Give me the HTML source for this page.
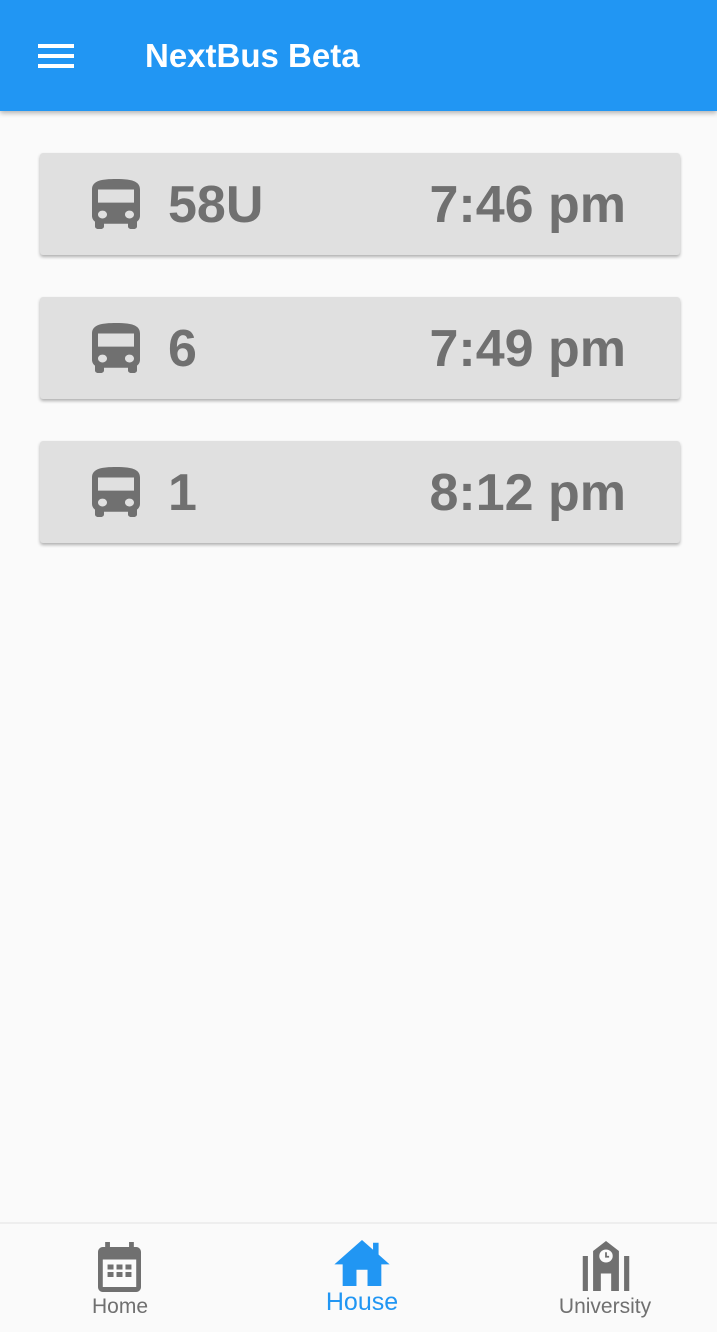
<!DOCTYPE html>
<html><head><meta charset="utf-8"><style>
*{margin:0;padding:0;box-sizing:border-box}
body{width:717px;height:1332px;background:#fafafa;font-family:"Liberation Sans",sans-serif;position:relative;overflow:hidden}
.bar{position:absolute;left:0;top:0;width:717px;height:111px;background:#2196f3;box-shadow:0 2px 5px rgba(0,0,0,.3)}
.ham{position:absolute;left:38px;width:36px;height:4px;background:#fff}
.title{position:absolute;left:145px;top:37px;color:#fff;font-size:33px;font-weight:bold}
.card{position:absolute;left:40px;width:640px;height:102px;background:#e0e0e0;box-shadow:0 2px 3px rgba(0,0,0,.3);border-radius:3px}
.card svg{position:absolute;left:52px;top:26px}
.num{position:absolute;left:128px;top:22px;font-size:52px;font-weight:bold;color:#707070}
.time{position:absolute;right:54px;top:22px;font-size:52px;font-weight:bold;color:#707070}
.nav{position:absolute;left:0;top:1222px;width:717px;height:110px;background:#fafafa;border-top:2px solid #eee}
.lbl{position:absolute;font-size:21px;color:#707070;transform:translateX(-50%)}
</style></head><body>
<div class="bar">
<div class="ham" style="top:44px"></div><div class="ham" style="top:54px"></div><div class="ham" style="top:64px"></div>
<div class="title">NextBus Beta</div>
</div>
<div class="card" style="top:153px"><svg width="48" height="50" viewBox="4 2 16 19" preserveAspectRatio="none"><path fill="#707070" d="M4 16c0 .88.39 1.67 1 2.22V20c0 .55.45 1 1 1h1c.55 0 1-.45 1-1v-1h8v1c0 .55.45 1 1 1h1c.55 0 1-.45 1-1v-1.78c.61-.55 1-1.34 1-2.22V6c0-3.5-3.58-4-8-4s-8 .5-8 4v10zm3.5 1c-.83 0-1.5-.67-1.5-1.5S6.67 14 7.5 14s1.5.67 1.5 1.5S8.33 17 7.5 17zm9 0c-.83 0-1.5-.67-1.5-1.5s.67-1.5 1.5-1.5 1.5.67 1.5 1.5-.67 1.5-1.5 1.5zm1.5-6H6V6h12v5z"/></svg><div class="num">58U</div><div class="time">7:46 pm</div></div>
<div class="card" style="top:297px"><svg width="48" height="50" viewBox="4 2 16 19" preserveAspectRatio="none"><path fill="#707070" d="M4 16c0 .88.39 1.67 1 2.22V20c0 .55.45 1 1 1h1c.55 0 1-.45 1-1v-1h8v1c0 .55.45 1 1 1h1c.55 0 1-.45 1-1v-1.78c.61-.55 1-1.34 1-2.22V6c0-3.5-3.58-4-8-4s-8 .5-8 4v10zm3.5 1c-.83 0-1.5-.67-1.5-1.5S6.67 14 7.5 14s1.5.67 1.5 1.5S8.33 17 7.5 17zm9 0c-.83 0-1.5-.67-1.5-1.5s.67-1.5 1.5-1.5 1.5.67 1.5 1.5-.67 1.5-1.5 1.5zm1.5-6H6V6h12v5z"/></svg><div class="num">6</div><div class="time">7:49 pm</div></div>
<div class="card" style="top:441px"><svg width="48" height="50" viewBox="4 2 16 19" preserveAspectRatio="none"><path fill="#707070" d="M4 16c0 .88.39 1.67 1 2.22V20c0 .55.45 1 1 1h1c.55 0 1-.45 1-1v-1h8v1c0 .55.45 1 1 1h1c.55 0 1-.45 1-1v-1.78c.61-.55 1-1.34 1-2.22V6c0-3.5-3.58-4-8-4s-8 .5-8 4v10zm3.5 1c-.83 0-1.5-.67-1.5-1.5S6.67 14 7.5 14s1.5.67 1.5 1.5S8.33 17 7.5 17zm9 0c-.83 0-1.5-.67-1.5-1.5s.67-1.5 1.5-1.5 1.5.67 1.5 1.5-.67 1.5-1.5 1.5zm1.5-6H6V6h12v5z"/></svg><div class="num">1</div><div class="time">8:12 pm</div></div>
<div class="nav">
<svg style="position:absolute;left:98px;top:18px" width="43" height="50" viewBox="3 1 18 20" preserveAspectRatio="none"><path fill="#707070" d="M19 3h-1V1h-2v2H8V1H6v2H5c-1.1 0-2 .9-2 2v14c0 1.1.9 2 2 2h14c1.1 0 2-.9 2-2V5c0-1.1-.9-2-2-2zm0 16H5V8h14v11zM7 10h2.5v2H7zm3.75 0h2.5v2h-2.5zm3.75 0H17v2h-2.5zM7 13h2.5v2H7zm3.75 0h2.5v2h-2.5zm3.75 0H17v2h-2.5z"/></svg>
<div class="lbl" style="left:120px;top:71px">Home</div>
<svg style="position:absolute;left:333px;top:16px" width="58" height="46" viewBox="1.5 3 21 17" preserveAspectRatio="none"><path fill="#2196f3" d="M10 20v-6h4v6h5v-8h3L12 3 2 12h3v8z"/><path fill="#2196f3" d="M16 4h2v5l-2-2z"/></svg>
<div class="lbl" style="left:362px;top:64px;font-size:25px;color:#2196f3">House</div>
<svg style="position:absolute;left:575px;top:17px" width="62" height="50" viewBox="0 0 24 20" preserveAspectRatio="none"><path fill="#707070" d="M12 0 7 4v16h3v-7h4v7h3V4z M3 6h2v14H3z M19 6h2v14h-2z"/><circle cx="12" cy="6" r="2.6" fill="#fafafa"/><path d="M12 4.5V6.3h1.2" stroke="#707070" stroke-width=".7" fill="none"/></svg>
<div class="lbl" style="left:605px;top:71px">University</div>
</div>
</body></html>
